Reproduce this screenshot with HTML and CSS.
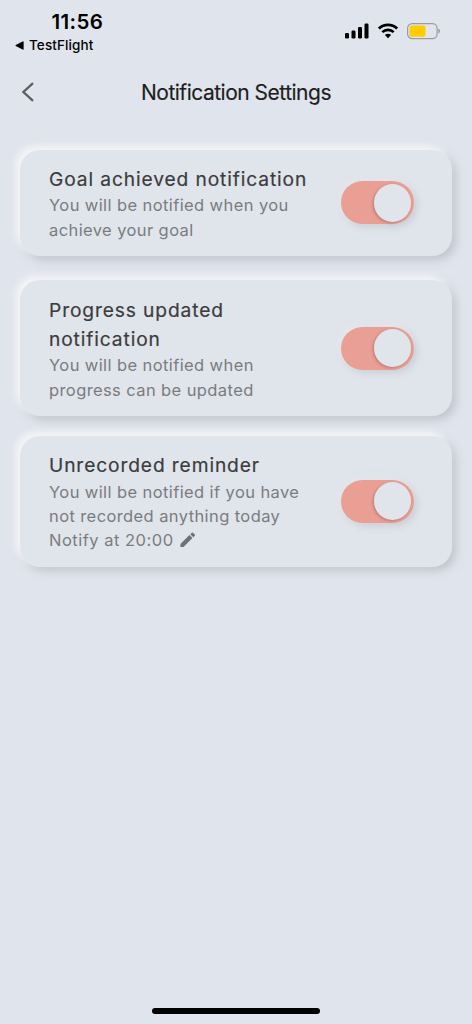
FILE: index.html
```html
<!DOCTYPE html>
<html lang="en">
<head>
<meta charset="utf-8">
<title>Notification Settings</title>
<link rel="stylesheet" href="styles.css">
</head>
<body>
<div class="screen">
  <header class="status">
    <div class="status-left">
      <div class="clock">11:56</div>
      <div class="back-app">
        <svg width="9" height="9" viewBox="0 0 9 9"><path d="M.8 4 7.6.5Q8.6 0 8.6 1v7q0 1-1 .5L.8 5Q0 4.500.8 4z"/></svg>
        <span>TestFlight</span>
      </div>
    </div>
    <div class="status-icons">
      <svg width="24" height="16" viewBox="0 0 24 16"><rect x="0" y="10" width="4" height="5.500" rx="1.200"/><rect x="6.500" y="7.500" width="4" height="8" rx="1.200"/><rect x="13" y="4" width="4" height="11.500" rx="1.200"/><rect x="19.500" y="0.500" width="4" height="15" rx="1.200"/></svg>
      <svg width="20" height="16" viewBox="0 0 20 16"><g fill="none" stroke="#000" stroke-width="2.700"><path d="M.9 5.600a13 13 0 0 1 18.200 0"/><path d="M4.300 9.100a8.200 8.200 0 0 1 11.400 0"/></g><path d="M10 15.200 6.900 12.100a4.400 4.400 0 0 1 6.200 0z"/></svg>
      <svg width="34" height="17" viewBox="0 0 34 17"><rect x=".6" y=".6" width="29.500" height="15" rx="4.600" fill="none" stroke="#999b9f" stroke-width="1.200"/><rect x="2.500" y="2.500" width="16" height="11.200" rx="2.500" fill="#ffcc00"/><path d="M31.400 5.600v5q1.700-.8 1.700-2.500t-1.700-2.500z" fill="#999b9f"/></svg>
    </div>
  </header>
  <nav class="navbar">
    <svg class="chevron" width="14" height="20" viewBox="0 0 14 20"><path d="M12 1.200 2.400 10 12 18.800" fill="none" stroke="#5e5f61" stroke-width="2.300"/></svg>
    <h1>Notification Settings</h1>
  </nav>
  <main>
    <section class="card goal">
      <div class="copy">
        <h2>Goal achieved notification</h2>
        <p>You will be notified when you<br>achieve your goal</p>
      </div>
      <div class="switch"><div class="knob"></div></div>
    </section>
    <section class="card progress">
      <div class="copy">
        <h2>Progress updated<br>notification</h2>
        <p>You will be notified when<br>progress can be updated</p>
      </div>
      <div class="switch"><div class="knob"></div></div>
    </section>
    <section class="card reminder">
      <div class="copy">
        <h2>Unrecorded reminder</h2>
        <p>You will be notified if you have<br>not recorded anything today<br><span class="time">Notify at 20:00</span><svg class="pencil" width="20" height="20" viewBox="0 0 24 24"><path d="M3 17.250V21h3.750L17.810 9.940l-3.750-3.750L3 17.250zM20.710 7.040a1 1 0 0 0 0-1.410l-2.340-2.340a1 1 0 0 0-1.410 0l-1.830 1.830 3.750 3.750 1.830-1.830z"/></svg></p>
      </div>
      <div class="switch"><div class="knob"></div></div>
    </section>
  </main>
  <footer><div class="home-bar"></div></footer>
</div>
</body>
</html>
```

FILE: styles.css
```css
* { box-sizing: border-box; }
body { margin: 0; background: #e0e4ec; font-family: Inter, "Liberation Sans", sans-serif; }
h1, h2, p { margin: 0; }
svg { display: block; flex: none; }
.screen { height: 1024px; display: flex; flex-direction: column; overflow: hidden; background: #e0e4ec; }
.status { display: flex; justify-content: space-between; height: 62px; padding: 9px 31px 0 15px; flex: none; }
.clock { font-size: 20.500px; font-weight: 600; line-height: 25px; padding-left: 36.500px; letter-spacing: .35px; }
.back-app { display: flex; align-items: center; gap: 5px; padding-top: 1px; font-size: 13.500px; font-weight: 500; line-height: 20px; letter-spacing: .1px; }
.status-icons { display: flex; align-items: flex-start; gap: 9px; padding-top: 14px; }
.navbar { display: grid; grid-template-columns: 40px 1fr 40px; align-items: center; height: 60px; flex: none; }
.chevron { margin: -1px 0 0 21px; }
h1 { padding-top: 1px; text-align: center; white-space: nowrap; color: #1d1e20; font-size: 21px; font-weight: 400; line-height: 28px; letter-spacing: -.5px; -webkit-text-stroke: .15px #1d1e20; }
main { display: flex; flex-direction: column; padding: 27.500px 20px 0; flex: 1; }
.card {
  display: flex; align-items: center; justify-content: space-between;
  padding: 0 38.500px 0 29px; border-radius: 20px; background: #e0e4eb;
  box-shadow: -4px -4px 7px rgba(248,248,248,.9), 4px 4px 8px rgba(163,166,175,.5);
}
.goal { height: 106.500px; margin-bottom: 24px; }
.progress { height: 136px; margin-bottom: 19.500px; }
.reminder { height: 131px; }
.copy { white-space: nowrap; padding-top: 1px; }
.goal h2, .progress h2 { padding-top: 1px; margin-bottom: -1px; }
h2 { color: #3c3c3d; font-size: 19.200px; font-weight: 400; line-height: 29px; letter-spacing: .88px; -webkit-text-stroke: .2px #3c3c3d; }
p { color: #7b7c7e; font-size: 16.500px; line-height: 24.300px; letter-spacing: .4px; }
.time { letter-spacing: .5px; }
.pencil { display: inline-block; width: 19.500px; height: 19.500px; vertical-align: -3.500px; margin-left: 4.500px; fill: #6f7071; }
.switch {
  width: 73px; height: 43px; padding: 3px 2.500px; border-radius: 22px; background: #e99f94;
  display: flex; justify-content: flex-end; align-items: center; flex: none;
  box-shadow: -3px -3px 7px rgba(235,238,240,.4), 3px 3px 7px rgba(163,166,175,.35);
}
.knob { width: 37.500px; height: 37.500px; border-radius: 50%; background: #e0e4eb; box-shadow: -1px 1px 3px rgba(120,65,60,.4); }
footer { display: flex; justify-content: center; height: 16px; flex: none; }
.home-bar { width: 168px; height: 6px; border-radius: 3px; background: #000; }
```
